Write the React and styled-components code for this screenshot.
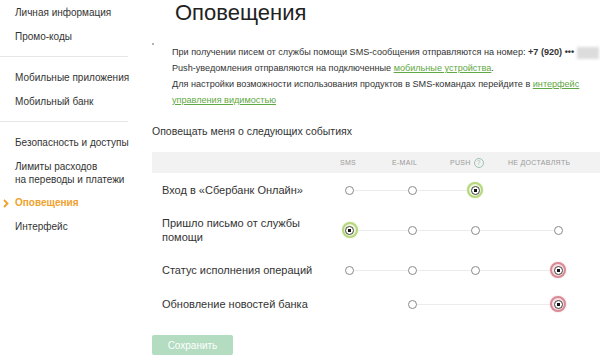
import React from "react";
import styled, { createGlobalStyle } from "styled-components";

const GlobalStyle = createGlobalStyle`
  html, body {
    margin: 0;
    padding: 0;
    background: #fff;
    overflow: hidden;
  }
  body {
    font-family: "Liberation Sans", Arial, sans-serif;
    color: #333;
  }
`;

const Page = styled.div`
  display: flex;
  width: 600px;
  height: 360px;
  overflow: hidden;
`;

const Sidebar = styled.nav`
  width: 140px;
  flex-shrink: 0;
  padding-top: 1px;
`;

const Group = styled.div`
  width: 128px;
  & + & {
    border-top: 1px solid #e6e6e6;
    margin-top: 7px;
    padding-top: 9px;
  }
`;

const NavItem = styled.div`
  position: relative;
  padding: 5px 0 5px 15px;
  font-size: 10px;
  white-space: nowrap;
  line-height: ${(p) => (p.$lines > 1 ? "13px" : "14px")};
  color: ${(p) => (p.$active ? "#f0a12b" : "#333")};
  font-weight: ${(p) => (p.$active ? "bold" : "normal")};
`;

const Chevron = styled.svg`
  position: absolute;
  left: 3px;
  top: 8px;
`;

const Main = styled.main`
  flex: 1;
  padding-left: 12px;
  min-width: 0;
`;

const Title = styled.h1`
  margin: 0 0 18px 23px;
  font-size: 22px;
  line-height: 26px;
  font-weight: normal;
  color: #222;
`;

const InfoRow = styled.div`
  display: flex;
  align-items: flex-start;
`;

const Dot = styled.span`
  width: 2px;
  height: 2px;
  border-radius: 1px;
  background: #999;
  margin-top: -1px;
  flex-shrink: 0;
`;

const InfoText = styled.div`
  margin-left: 18px;
  font-size: 9.1px;
  line-height: 16px;
  color: #333;
  white-space: nowrap;
`;

const Link = styled.a`
  color: #5fa843;
  text-decoration: underline;
`;

const Blurred = styled.span`
  display: inline-block;
  vertical-align: middle;
  width: 22px;
  height: 12px;
  margin-left: 3px;
  background: #dcdcdc;
  filter: blur(1.5px);
`;

const Subtitle = styled.div`
  margin-top: 16px;
  font-size: 10.5px;
  line-height: 14px;
  color: #333;
`;

const TableHead = styled.div`
  margin-top: 14px;
  height: 21px;
  background: #f2f2f2;
  display: grid;
  grid-template-columns: 188px 52px 58px 58px 1fr;
  align-items: center;
  width: 460px;
`;

const HeadCell = styled.div`
  font-size: 7px;
  letter-spacing: 0.3px;
  color: #999;
  text-transform: uppercase;
  display: flex;
  align-items: center;
  gap: 3px;
  white-space: nowrap;
`;

const Help = styled.span`
  width: 8px;
  height: 8px;
  border: 1px solid #9cc4ad;
  border-radius: 50%;
  color: #9cc4ad;
  font-size: 6.5px;
  line-height: 8px;
  text-align: center;
  text-transform: none;
`;

const Row = styled.div`
  display: grid;
  grid-template-columns: 166px 63px 63px 62px 104px;
  align-items: center;
  padding: 9px 0;
  width: 458px;
`;

const Label = styled.div`
  padding-left: 10px;
  font-size: 11px;
  line-height: ${(p) => (p.$lines > 1 ? "14px" : "15px")};
  color: #333;
`;

const Cell = styled.div`
  position: relative;
  height: 16px;
  display: flex;
  align-items: center;
  justify-content: center;

  &::before,
  &::after {
    content: "";
    position: absolute;
    top: 8px;
    height: 1px;
    background: #ececec;
    width: 50%;
  }
  &::before {
    left: 0;
    display: ${(p) => (p.$left ? "block" : "none")};
  }
  &::after {
    right: 0;
    display: ${(p) => (p.$right ? "block" : "none")};
  }
`;

const Radio = styled.span`
  position: relative;
  z-index: 1;
  box-sizing: border-box;
  width: 9px;
  height: 9px;
  border-radius: 50%;
  border: 1px solid #8a8a8a;
  background: #fff;
`;

const Selected = styled.span`
  position: relative;
  z-index: 1;
  box-sizing: border-box;
  width: 16px;
  height: 16px;
  border-radius: 50%;
  border: 2px solid ${(p) => (p.$tone === "red" ? "#d98a95" : "#b6d77c")};
  background: ${(p) => (p.$tone === "red" ? "#f6e1e4" : "#edf5dc")};
  box-shadow: 0 0 2px ${(p) => (p.$tone === "red" ? "#efc7cd" : "#dcebc0")};
  display: flex;
  align-items: center;
  justify-content: center;

  &::before {
    content: "";
    box-sizing: border-box;
    width: 9px;
    height: 9px;
    border-radius: 50%;
    border: 1px solid #444;
    background: radial-gradient(circle, #111 0 1.6px, #fff 2px);
  }
`;

const SaveButton = styled.button`
  margin-top: 14px;
  width: 81px;
  height: 20px;
  border: none;
  border-radius: 2px;
  background: #b4dcc1;
  color: #fff;
  font-family: "Liberation Sans", Arial, sans-serif;
  font-size: 10px;
  padding: 0;
`;

const nav = [
  ["Личная информация", "Промо-коды"],
  ["Мобильные приложения", "Мобильный банк"],
  ["Безопасность и доступы", "Лимиты расходов\nна переводы и платежи", "Оповещения", "Интерфейс"],
];

const columns = ["SMS", "E-mail", "Push", "Не доставлять"];

// values: 0 = no radio, 1 = radio, 2 = selected green, 3 = selected red
const events = [
  { label: "Вход в «Сбербанк Онлайн»", values: [1, 1, 2, 0] },
  { label: "Пришло письмо от службы\nпомощи", values: [2, 1, 1, 1] },
  { label: "Статус исполнения операций", values: [1, 1, 1, 3] },
  { label: "Обновление новостей банка", values: [0, 1, 0, 3] },
];

const EventRow = ({ label, values }) => {
  const first = values.findIndex((v) => v > 0);
  const last = values.length - 1 - [...values].reverse().findIndex((v) => v > 0);
  const lines = label.split("\n");
  return (
    <Row>
      <Label $lines={lines.length}>
        {lines.map((line, i) => (
          <div key={i}>{line}</div>
        ))}
      </Label>
      {values.map((v, i) => (
        <Cell key={i} $left={i > first && i <= last} $right={i >= first && i < last}>
          {v === 1 && <Radio />}
          {v === 2 && <Selected $tone="green" />}
          {v === 3 && <Selected $tone="red" />}
        </Cell>
      ))}
    </Row>
  );
};

const App = () => {
  return (
    <>
      <GlobalStyle />
      <Page>
        <Sidebar>
          {nav.map((group, g) => (
            <Group key={g}>
              {group.map((item) => {
                const lines = item.split("\n");
                const active = item === "Оповещения";
                return (
                  <NavItem key={item} $active={active} $lines={lines.length}>
                    {active && (
                      <Chevron width="6" height="9" viewBox="0 0 6 9">
                        <path d="M1 1l3.5 3.5L1 8" fill="none" stroke="#f0a12b" strokeWidth="1.8" />
                      </Chevron>
                    )}
                    {lines.map((l, i) => (
                      <div key={i}>{l}</div>
                    ))}
                  </NavItem>
                );
              })}
            </Group>
          ))}
        </Sidebar>
        <Main>
          <Title>Оповещения</Title>
          <InfoRow>
            <Dot />
            <InfoText>
              <div>
                При получении писем от службы помощи SMS-сообщения отправляются на номер:{" "}
                <b>+7 (920) •••</b>
                <Blurred />
              </div>
              <div>
                Push-уведомления отправляются на подключенные <Link>мобильные устройства</Link>.
              </div>
              <div>
                Для настройки возможности использования продуктов в SMS-командах перейдите в{" "}
                <Link>
                  интерфейс
                  <br />
                  управления видимостью
                </Link>
              </div>
            </InfoText>
          </InfoRow>
          <Subtitle>Оповещать меня о следующих событиях</Subtitle>
          <TableHead>
            <div />
            {columns.map((c) => (
              <HeadCell key={c}>
                {c}
                {c === "Push" && <Help>?</Help>}
              </HeadCell>
            ))}
          </TableHead>
          {events.map((e) => (
            <EventRow key={e.label} {...e} />
          ))}
          <SaveButton>Сохранить</SaveButton>
        </Main>
      </Page>
    </>
  );
};

export default App;
